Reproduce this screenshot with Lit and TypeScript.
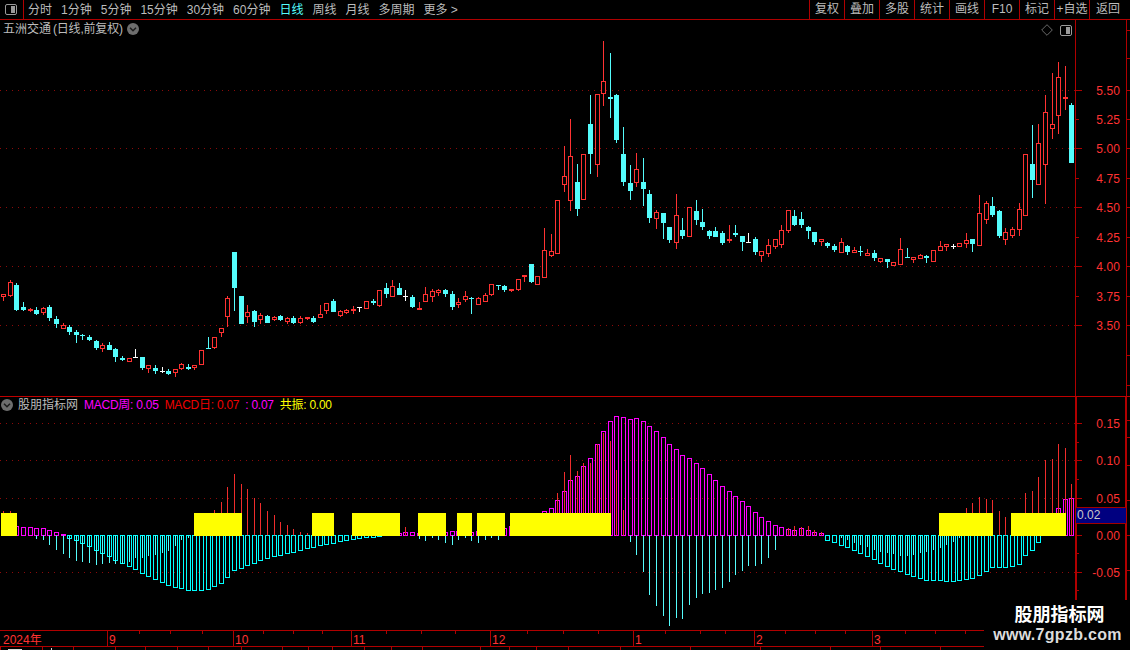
import { LitElement, html, css, svg } from "lit";
import { customElement } from "lit/decorators.js";

type C = [number, number, number, number, string];
const K: C[] = [
[294,297,294,301,"r"],[282,296,280,297,"r"],[285,310,283,311,"c"],[307,310,302,311,"c"],[309,311,308,312,"r"],[310,314,307,315,"c"],[308,313,307,315,"r"],[307,318,305,321,"c"],[319,324,316,328,"c"],[325,329,323,329,"r"],
[327,332,325,335,"c"],[332,335,330,343,"c"],[335,336,334,340,"c"],[337,340,335,341,"c"],[341,348,340,350,"c"],[345,349,343,352,"r"],[345,350,342,350,"c"],[349,357,348,362,"c"],[358,360,356,361,"c"],[358,362,358,362,"r"],
[357,357,349,357,"w"],[357,368,357,370,"c"],[365,369,365,373,"r"],[368,371,365,374,"c"],[371,371,367,373,"w"],[371,374,369,375,"c"],[369,373,369,377,"r"],[364,369,363,370,"r"],[367,369,364,370,"c"],[365,368,365,370,"r"],
[350,365,350,365,"r"],[348,348,337,348,"c"],[337,348,337,349,"r"],[328,333,328,337,"r"],[298,317,296,327,"r"],[252,288,252,311,"c"],[296,324,296,324,"c"],[312,317,305,323,"r"],[311,322,310,327,"c"],[315,320,313,324,"r"],
[316,323,315,323,"c"],[317,320,316,321,"r"],[316,320,315,321,"c"],[318,322,317,324,"r"],[318,323,316,324,"c"],[318,323,316,324,"r"],[317,319,317,320,"r"],[318,322,316,323,"c"],[314,318,305,318,"r"],[303,311,303,314,"r"],
[301,312,299,312,"c"],[311,316,310,317,"r"],[310,313,309,314,"r"],[309,311,306,314,"r"],[307,307,307,312,"w"],[301,309,301,309,"r"],[301,303,299,305,"c"],[290,306,290,307,"r"],[288,294,283,298,"c"],[286,297,280,297,"r"],
[288,295,283,295,"c"],[296,296,290,301,"w"],[297,307,295,308,"c"],[308,310,302,310,"r"],[294,302,287,302,"r"],[291,297,289,302,"r"],[290,293,289,296,"r"],[290,294,289,297,"c"],[294,307,291,310,"c"],[302,305,298,308,"r"],
[296,300,291,302,"r"],[298,298,297,314,"c"],[298,305,297,305,"r"],[295,302,293,302,"r"],[284,295,284,296,"r"],[285,285,285,290,"c"],[286,290,285,292,"c"],[289,291,289,292,"r"],[279,290,279,291,"r"],[275,277,275,282,"r"],
[264,282,264,283,"c"],[276,285,276,285,"r"],[250,278,228,278,"r"],[251,256,234,257,"r"],[200,254,200,254,"r"],[176,185,146,192,"r"],[156,201,119,211,"r"],[182,209,164,216,"c"],[154,200,154,200,"r"],[124,154,95,174,"c"],
[94,165,94,177,"r"],[81,94,41,106,"r"],[97,99,53,118,"c"],[95,140,94,143,"c"],[154,182,127,186,"c"],[183,191,165,200,"c"],[169,183,153,187,"r"],[182,189,158,206,"c"],[194,218,190,223,"c"],[212,219,210,229,"r"],
[213,223,213,239,"c"],[227,240,227,243,"c"],[215,243,194,249,"r"],[230,236,218,239,"c"],[207,237,207,237,"r"],[211,220,200,225,"c"],[222,227,209,230,"c"],[231,236,230,239,"c"],[231,237,227,237,"c"],[233,243,231,245,"c"],
[239,241,225,243,"r"],[233,235,225,237,"c"],[236,242,236,251,"c"],[242,242,233,242,"w"],[239,252,237,255,"c"],[251,256,251,262,"r"],[245,254,239,257,"r"],[239,247,239,249,"r"],[230,245,225,248,"r"],[210,231,210,233,"r"],
[216,225,210,226,"c"],[219,225,212,228,"c"],[227,231,226,239,"c"],[232,242,232,245,"c"],[239,242,239,246,"r"],[243,246,242,248,"c"],[246,250,244,252,"c"],[242,253,238,253,"r"],[246,252,245,255,"c"],[250,253,247,253,"r"],
[251,251,246,256,"c"],[253,256,249,256,"r"],[253,258,250,261,"c"],[258,262,258,263,"r"],[259,262,259,268,"c"],[262,266,262,266,"r"],[249,265,238,265,"r"],[257,257,248,258,"c"],[257,260,257,263,"r"],[255,259,254,259,"r"],
[256,258,255,263,"c"],[250,262,250,262,"r"],[246,251,241,251,"r"],[244,247,244,251,"r"],[246,246,244,249,"w"],[243,247,243,247,"r"],[240,244,233,248,"r"],[239,244,239,252,"c"],[213,246,195,246,"r"],[203,220,201,224,"r"],
[206,215,197,217,"c"],[211,236,210,238,"c"],[232,240,228,245,"r"],[229,236,227,238,"r"],[209,230,203,236,"r"],[154,216,154,216,"r"],[164,180,125,198,"c"],[143,185,124,185,"r"],[112,165,95,204,"r"],[124,129,73,139,"r"],
[77,116,62,134,"r"],[97,99,66,110,"r"],[105,163,103,163,"c"],
];

const WIDE = [
527,527,526,527,527,528,528,530,532,534,
538,540,543,546,550,553,556,560,563,566,
569,573,576,579,582,585,587,588,590,590,
590,589,586,583,577,570,568,565,563,560,
558,556,555,553,552,550,548,547,545,544,
543,541,540,539,538,537,537,536,535,535,
533,532,532,533,533,534,534,532,531,531,
532,532,531,530,530,529,528,526,522,520,
517,514,511,508,500,491,480,476,466,458,
444,431,421,416,417,419,418,421,426,431,
437,444,449,455,458,463,468,474,480,486,
491,496,501,506,512,517,521,525,527,529,
530,528,530,532,533,540,542,545,547,550,
553,556,559,563,566,569,571,574,576,578,
580,580,580,581,581,580,579,578,575,571,
567,567,567,566,564,555,550,542,535,530,
508,499,498,
];

const THIN: Record<number, number> = {
0:511,1:511,2:520,5:539,6:540,7:545,8:550,9:554,10:558,11:561,12:562,13:563,14:565,15:564,16:563,17:564,18:564,19:562,20:558,21:558,22:556,23:555,24:553,25:551,26:546,27:540,28:538,
29:530,30:525,31:520,32:510,33:502,34:487,35:474,36:484,37:489,38:498,39:503,40:511,41:515,42:522,43:525,44:529,45:532,46:533,
61:527,63:539,64:541,65:538,66:540,67:543,68:545,69:540,70:538,71:541,72:543,73:540,74:538,75:540,76:533,77:530,
84:493,85:472,86:455,87:471,88:463,89:463,90:444,91:433,92:441,93:470,94:510,
95:542,96:555,97:572,98:595,99:606,100:616,101:626,102:618,103:619,104:605,105:598,106:594,107:593,108:590,109:588,110:582,111:575,112:571,113:566,114:566,115:564,116:558,117:550,
119:528,120:526,121:527,122:526,123:530,124:532,
127:538,128:540,129:543,130:545,131:547,132:550,133:552,134:553,135:554,136:556,137:556,138:555,139:553,140:552,141:550,142:548,143:545,144:542,145:538,
146:508,147:503,148:497,149:499,150:500,151:511,152:517,155:493,156:491,157:477,158:460,159:459,160:444,161:448,162:484,
};

const YELLOW: [number, number][] = [[1,17],[194,242],[312,334],[352,400],[418,446],[457,472],[477,505],[510,611],[939,993],[1011,1066]];
const cx = (i: number) => Math.round(3.3 + 6.593 * i);

const PRICE_LABELS: [string, number][] = [["5.50",90],["5.25",119],["5.00",148],["4.75",178],["4.50",207],["4.25",237],["4.00",266],["3.75",296],["3.50",325]];
const MACD_LABELS: [string, number][] = [["0.15",423],["0.10",460],["0.05",498],["0.00",535],["-0.05",572]];
const MONTHS: [string, number][] = [["2024年",3],["9",109],["10",235],["11",353],["12",492],["1",635],["2",756],["3",874]];
const MONTH_LINES = [107,233,351,490,633,754,872];
const MINOR = [139,170,202,263,293,322,386,421,455,527,563,598,665,700,725,785,815,845,905,935,965];
const TABS = [42,73,115,145,177,208,241,282,308,332,364,391,422,480,509,536,568,620,690,760,830,880,940];

function candle(c: C, i: number) {
  const [top, bot, hi, lo, t] = c;
  const x = cx(i);
  const cls = t === "r" ? "red" : t === "c" ? "cy" : "wh";
  const parts = [svg`<rect class=${cls + "-f"} x=${x} y=${hi} width="1" height=${Math.max(1, lo - hi)}></rect>`];
  if (bot - top <= 2) {
    parts.push(svg`<rect class=${cls + "-f"} x=${x - 2} y=${top} width="5" height=${Math.max(1, bot - top)}></rect>`);
  } else if (t === "c") {
    parts.push(svg`<rect class="cy-f" x=${x - 2} y=${top} width="5" height=${bot - top}></rect>`);
  } else {
    parts.push(svg`<rect class="hollow-red" x=${x - 1.5} y=${top + 0.5} width="4" height=${bot - top - 1}></rect>`);
  }
  return parts;
}

function chevron() {
  return html`<svg class="chev" viewBox="0 0 12 12" width="12" height="12">
    <circle cx="6" cy="6" r="6" fill="#6e6e6e"></circle>
    <path d="M3 4.8 L6 7.8 L9 4.8" fill="none" stroke="#1c1c1c" stroke-width="1.5"></path>
  </svg>`;
}

function panelIcon() {
  return html`<svg class="panel-ico" viewBox="0 0 12 11" width="12" height="11">
    <rect x="0.5" y="0.5" width="11" height="10" rx="1.5" fill="none" stroke="#9a9a9a"></rect>
    <rect x="6" y="2" width="4" height="7" fill="#9a9a9a"></rect>
  </svg>`;
}

@customElement("app-root")
export class AppRoot extends LitElement {
  static styles = css`
    :host {
      display: flex;
      flex-direction: column;
      position: relative;
      width: 1130px;
      height: 650px;
      overflow: hidden;
      background: #000;
      color: #bcbcbc;
      font: 12px/16px "Liberation Sans", "Noto Sans CJK SC", sans-serif;
    }
    svg { display: block; }
    .toolbar {
      display: flex;
      align-items: center;
      box-sizing: border-box;
      height: 20px;
      flex: none;
      border-bottom: 1px solid #b00000;
    }
    .tool-ico {
      display: flex;
      align-items: center;
      justify-content: center;
      box-sizing: border-box;
      width: 24px;
      height: 19px;
      border-right: 1px solid #b00000;
      padding-right: 1px;
    }
    .periods { display: flex; gap: 9px; padding-left: 4px; }
    .active { color: #54fcfc; }
    .actions { display: flex; margin-left: auto; height: 19px; }
    .actions span {
      box-sizing: border-box;
      width: 35px;
      line-height: 18px;
      text-align: center;
      border-left: 1px solid #b00000;
    }
    .actions span:last-child { width: 41px; text-align: left; padding-left: 6px; }
    .pane { position: relative; flex: none; }
    .price { height: 376px; border-bottom: 1px solid #c00000; }
    .macd { height: 233px; }
    .legend {
      position: absolute;
      left: 0;
      display: flex;
      align-items: center;
      white-space: nowrap;
    }
    .price .legend { left: 3px; top: 1px; gap: 4px; }
    .name-rest { margin-left: 2px; letter-spacing: -0.2px; }
    .price .legend .name { margin-right: -4px; }
    .macd .legend { left: 1px; top: 0; gap: 6px; }
    .macd .legend .val { letter-spacing: -0.25px; }
    .macd .legend .first { margin-left: -1px; }
    .magenta { color: #ff00ff; }
    .redtxt { color: #f00000; }
    .yellow { color: #ffff00; }
    .pane-tools {
      position: absolute;
      right: 58px;
      top: 4px;
      display: flex;
      align-items: center;
      gap: 7px;
    }
    .badge {
      position: absolute;
      left: 1076px;
      top: 110px;
      box-sizing: border-box;
      width: 50px;
      height: 17px;
      padding-left: 1px;
      background: #000080;
      border: solid #a00000;
      border-width: 1px 0;
      line-height: 15px;
      color: #c8c8c8;
    }
    .watermark {
      position: absolute;
      left: 984px;
      top: 600px;
      width: 146px;
      height: 50px;
      display: flex;
      flex-direction: column;
      align-items: center;
      background: #000;
      color: #fff;
      font-weight: 700;
    }
    .wm-a { font-size: 18px; line-height: 22px; margin-top: 4px; margin-left: 5px; }
    .wm-b { font-size: 16px; line-height: 18px; color: #dcdcdc; letter-spacing: 0.3px; margin-left: 1px; }
    .red-f { fill: #ff3232; }
    .cy-f { fill: #54fcfc; }
    .wh-f { fill: #fff; }
    .hollow-red { fill: #000; stroke: #ff3232; stroke-width: 1; }
    .grid { stroke: #8c0a0a; stroke-width: 1; stroke-dasharray: 1 5; }
    .axis { stroke: #b00000; stroke-width: 1; fill: none; }
    .axis2 { stroke: #b00000; stroke-width: 2; fill: none; }
    .tick { stroke: #b00000; stroke-width: 1; }
    .lbl { fill: #ff3232; font: 12px "Liberation Sans", "Noto Sans CJK SC", sans-serif; text-anchor: end; letter-spacing: 0.1px; }
    .date { fill: #ff3232; font: 12px "Liberation Sans", "Noto Sans CJK SC", sans-serif; }
    .w-m { fill: none; stroke: #ff00ff; stroke-width: 1; }
    .w-c { fill: none; stroke: #00ffff; stroke-width: 1; }
    .t-r { stroke: #f02c2c; stroke-width: 1; }
    .t-c { stroke: #54fcfc; stroke-width: 1; }
    .y { fill: #ffff00; }
    .white-mark { fill: #d8d8d8; }
  `;

  private gridLine(y: number) {
    return svg`<line class="grid" x1="0" x2="1075" y1=${y + 0.5} y2=${y + 0.5}></line>`;
  }

  private priceSvg() {
    const ys = [90, 148, 207, 266, 325];
    const rightTicks = [30, 58, 90, 119, 148, 178, 207, 237, 266, 296, 325, 355, 385];
    return html`<svg width="1130" height="376" viewBox="0 20 1130 376">
      ${ys.map((y) => this.gridLine(y))}
      ${K.map((c, i) => candle(c, i))}
      <line class="axis" x1="1075.5" x2="1075.5" y1="20" y2="396"></line>
      <line class="axis" x1="1126.5" x2="1126.5" y1="20" y2="396"></line>
      ${PRICE_LABELS.map(([t, y], i) => svg`
        <line class="tick" x1="1076" x2=${i % 2 ? 1079 : 1082} y1=${y + 0.5} y2=${y + 0.5}></line>
        <text class="lbl" x="1120" y=${y + 4.5}>${t}</text>`)}
      ${rightTicks.map((y) => svg`<line class="tick" x1="1127" x2="1130" y1=${y + 0.5} y2=${y + 0.5}></line>`)}
    </svg>`;
  }

  private macdSvg() {
    const ticks = [423, 442, 460, 479, 498, 516, 535, 553, 572, 590, 609];
    return html`<svg width="1130" height="233" viewBox="0 397 1130 233">
      ${[423, 460, 498, 572].map((y) => this.gridLine(y))}
      ${WIDE.map((v, i) => {
        if (v === 535) return null;
        const x = cx(i);
        const top = Math.min(v, 535);
        const h = Math.abs(v - 535);
        return svg`<rect class=${v < 535 ? "w-m" : "w-c"} x=${x - 1.5} y=${top + 0.5} width="4" height=${h}></rect>`;
      })}
      ${Object.entries(THIN).map(([k, v]) => {
        const x = cx(Number(k)) + 0.5;
        return svg`<line class=${v < 535 ? "t-r" : "t-c"} x1=${x} x2=${x} y1="535.5" y2=${v}></line>`;
      })}
      ${YELLOW.map(([a, b]) => svg`<rect class="y" x=${a} y="513" width=${b - a} height="23"></rect>`)}
      <line class="axis2" x1="1076" x2="1076" y1="397" y2="630"></line>
      <line class="axis2" x1="1126" x2="1126" y1="397" y2="630"></line>
      ${ticks.map((y, i) => svg`<line class="tick" x1="1077" x2=${i % 2 ? 1079 : 1082} y1=${y + 0.5} y2=${y + 0.5}></line>`)}
      ${MACD_LABELS.map(([t, y]) => svg`<text class="lbl" x="1120" y=${y + 4.5}>${t}</text>`)}
      ${[420, 437, 465, 500, 535, 570, 600].map((y) => svg`<line class="tick" x1="1127" x2="1130" y1=${y + 0.5} y2=${y + 0.5}></line>`)}
    </svg>`;
  }

  private dateSvg() {
    return html`<svg width="1130" height="20" viewBox="0 630 1130 20">
      <line class="axis" x1="0" x2="1126" y1="630.5" y2="630.5"></line>
      <line class="axis" x1="0" x2="1126" y1="646.5" y2="646.5"></line>
      ${MONTH_LINES.map((x) => svg`<line class="tick" x1=${x + 0.5} x2=${x + 0.5} y1="631" y2="646"></line>`)}
      ${MINOR.map((x) => svg`<line class="tick" x1=${x + 0.5} x2=${x + 0.5} y1="631" y2="634"></line>`)}
      ${MONTHS.map(([t, x]) => svg`<text class="date" x=${x} y="644">${t}</text>`)}
      ${TABS.map((x) => svg`<line class="tick" x1=${x + 0.5} x2=${x + 0.5} y1="647" y2="650"></line>`)}
      <line class="tick" x1="0.5" x2="0.5" y1="647" y2="650"></line>
      <rect class="white-mark" x="8" y="649" width="14" height="1"></rect>
      <rect class="white-mark" x="51" y="648" width="1" height="2"></rect>
    </svg>`;
  }

  render() {
    const periods = ["分时", "1分钟", "5分钟", "15分钟", "30分钟", "60分钟", "日线", "周线", "月线", "多周期", "更多 >"];
    const actions = ["复权", "叠加", "多股", "统计", "画线", "F10", "标记", "+自选", "返回"];
    return html`
      <div class="toolbar">
        <div class="tool-ico">${panelIcon()}</div>
        <div class="periods">
          ${periods.map((p) => html`<span class=${p === "日线" ? "active" : ""}>${p}</span>`)}
        </div>
        <div class="actions">${actions.map((a) => html`<span>${a}</span>`)}</div>
      </div>
      <div class="pane price">
        ${this.priceSvg()}
        <div class="legend"><span class="name">五洲交通</span><span class="name-rest">(日线,前复权)</span>${chevron()}</div>
        <div class="pane-tools">
          <svg viewBox="0 0 12 12" width="12" height="12"><path d="M6 .7 L11.3 6 L6 11.3 L.7 6 Z" fill="none" stroke="#6a6a6a"></path></svg>
          ${panelIcon()}
        </div>
      </div>
      <div class="pane macd">
        ${this.macdSvg()}
        <div class="legend">
          ${chevron()}
          <span class="first">股朋指标网</span>
          <span class="magenta val">MACD周: 0.05</span>
          <span class="redtxt val">MACD日: 0.07</span>
          <span class="magenta val">: 0.07</span>
          <span class="yellow val">共振: 0.00</span>
        </div>
        <div class="badge">0.02</div>
      </div>
      <div class="pane">${this.dateSvg()}</div>
      <div class="watermark">
        <div class="wm-a">股朋指标网</div>
        <div class="wm-b">www.7gpzb.com</div>
      </div>
    `;
  }
}
